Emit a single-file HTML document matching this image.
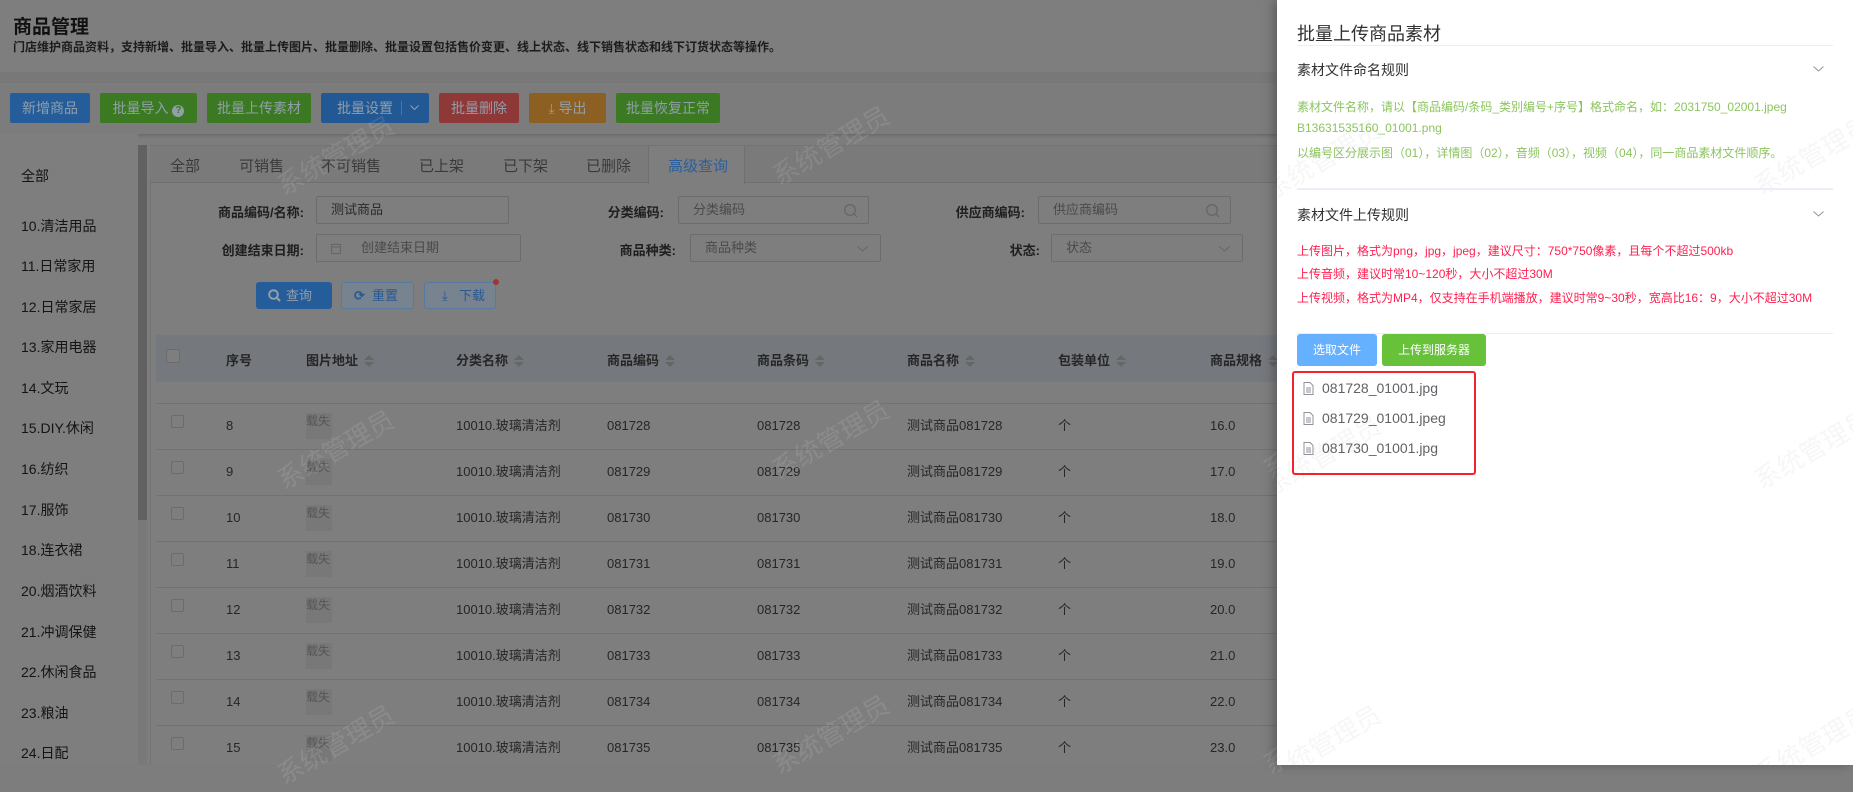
<!DOCTYPE html>
<html><head><meta charset="utf-8">
<style>
*{box-sizing:border-box;margin:0;padding:0}
body{width:1853px;height:765px;overflow:hidden;position:relative;background:#7d7d7d;font-family:"Liberation Sans","Noto Sans CJK SC",sans-serif;color:#1e1e1e}
.a{position:absolute;white-space:nowrap}
.btn{position:absolute;top:93px;height:30px;border-radius:2px;color:#929eaa;font-size:14px;line-height:30px;text-align:center}
.side{font-size:14px;color:#141414;left:21px}
.tab{font-size:15px;color:#3a3a3a;top:155px}
.lbl{font-size:13px;font-weight:bold;color:#1f1f1f;text-align:right}
.inp{position:absolute;border:1px solid #6c6c6c;border-radius:2px;background:#7e7e7e;font-size:13px;color:#4a4a4a;line-height:26px;padding-left:14px}
.th{font-size:13px;font-weight:bold;color:#262626;top:350px}
.sort{display:inline-block;width:0;vertical-align:middle;margin-left:6px;position:relative;top:-1px}
.sort:before{content:"";position:absolute;left:0;top:-6px;border:5px solid transparent;border-bottom-color:#666;border-top:0}
.sort:after{content:"";position:absolute;left:0;top:1px;border:5px solid transparent;border-top-color:#666;border-bottom:0}
.td{font-size:13px;color:#262626;height:20px;line-height:20px}
.wm{position:absolute;font-size:26px;transform:rotate(-30deg);white-space:nowrap;font-family:"Liberation Sans","Noto Sans CJK SC",sans-serif}
svg.a{overflow:visible}
</style></head><body>
<div class="a" style="left:0;top:0;width:1277px;height:72px;background:#7e7e7e"></div>
<div class="a" style="left:13px;top:12px;font-size:19px;font-weight:bold;color:#111">商品管理</div>
<div class="a" style="left:13px;top:38px;font-size:12px;font-weight:bold;color:#1c1c1c">门店维护商品资料，支持新增、批量导入、批量上传图片、批量删除、批量设置包括售价变更、线上状态、线下销售状态和线下订货状态等操作。</div>
<div class="a" style="left:0;top:72px;width:1277px;height:12px;background:#787878"></div>
<div class="a" style="left:0;top:83px;width:1277px;height:51px;background:#7c7c7c;box-shadow:0 2px 3px rgba(0,0,0,.15)"></div>
<div class="btn" style="left:10px;width:80px;background:#245d9a">新增商品</div>
<div class="btn" style="left:100px;width:97px;background:#3b7a23">批量导入 <span style="display:inline-block;width:12px;height:12px;border-radius:50%;background:#929eaa;color:#3b7a23;font-size:10px;line-height:12px;font-weight:bold">?</span></div>
<div class="btn" style="left:207px;width:104px;background:#3b7a23">批量上传素材</div>
<div class="btn" style="left:321px;width:108px;background:#225894;text-align:left;padding-left:16px">批量设置<span style="position:absolute;left:80px;top:8px;height:14px;border-left:1px solid #4f74a0"></span><svg class="a" style="left:89px;top:12px" width="9" height="6"><path d="M.5 .5L4.5 4.5L8.5 .5" fill="none" stroke="#929eaa"/></svg></div>
<div class="btn" style="left:439px;width:80px;background:#8e3838">批量删除</div>
<div class="btn" style="left:529px;width:77px;background:#8c6022">⤓ 导出</div>
<div class="btn" style="left:616px;width:104px;background:#3b7a23">批量恢复正常</div>
<div class="a" style="left:0;top:134px;width:138px;height:631px;background:#7e7e7e"></div>
<div class="a" style="left:138px;top:145px;width:9px;height:375px;background:#616161"></div>
<div class="a" style="left:138px;top:520px;width:9px;height:245px;background:#797979"></div>
<div class="a side" style="top:166px">全部</div>
<div class="a side" style="top:216px">10.清洁用品</div>
<div class="a side" style="top:256px">11.日常家用</div>
<div class="a side" style="top:297px">12.日常家居</div>
<div class="a side" style="top:337px">13.家用电器</div>
<div class="a side" style="top:378px">14.文玩</div>
<div class="a side" style="top:418px">15.DIY.休闲</div>
<div class="a side" style="top:459px">16.纺织</div>
<div class="a side" style="top:500px">17.服饰</div>
<div class="a side" style="top:540px">18.连衣裙</div>
<div class="a side" style="top:581px">20.烟酒饮料</div>
<div class="a side" style="top:622px">21.冲调保健</div>
<div class="a side" style="top:662px">22.休闲食品</div>
<div class="a side" style="top:703px">23.粮油</div>
<div class="a side" style="top:743px">24.日配</div>
<div class="a" style="left:150px;top:145px;width:1127px;height:620px;background:#7e7e7e;border-left:1px solid #737373;border-top:1px solid #737373"></div>
<div class="a" style="left:150px;top:146px;width:1127px;height:37px;background:#7a7a7a;border-bottom:1px solid #6f6f6f"></div>
<div class="a" style="left:648px;top:146px;width:97px;height:38px;background:#7e7e7e;border-left:1px solid #6f6f6f;border-right:1px solid #6f6f6f"></div>
<div class="a tab" style="left:170px">全部</div>
<div class="a tab" style="left:239px">可销售</div>
<div class="a tab" style="left:321px">不可销售</div>
<div class="a tab" style="left:419px">已上架</div>
<div class="a tab" style="left:503px">已下架</div>
<div class="a tab" style="left:586px">已删除</div>
<div class="a tab" style="left:668px;color:#2a5e9e">高级查询</div>
<div class="a lbl" style="left:200px;width:104px;top:202px">商品编码/名称:</div>
<div class="inp" style="left:316px;top:196px;width:193px;height:28px;color:#2a2a2a">测试商品</div>
<div class="a lbl" style="left:560px;width:104px;top:202px">分类编码:</div>
<div class="inp" style="left:678px;top:196px;width:191px;height:28px">分类编码<svg class="a" style="right:10px;top:7px" width="14" height="14"><circle cx="6" cy="6" r="5.3" fill="none" stroke="#666" stroke-width="1.3"/><path d="M10 10L13 13" stroke="#666" stroke-width="1.3"/></svg></div>
<div class="a lbl" style="left:921px;width:104px;top:202px">供应商编码:</div>
<div class="inp" style="left:1038px;top:196px;width:193px;height:28px">供应商编码<svg class="a" style="right:10px;top:7px" width="14" height="14"><circle cx="6" cy="6" r="5.3" fill="none" stroke="#666" stroke-width="1.3"/><path d="M10 10L13 13" stroke="#666" stroke-width="1.3"/></svg></div>
<div class="a lbl" style="left:200px;width:104px;top:240px">创建结束日期:</div>
<div class="inp" style="left:316px;top:234px;width:205px;height:28px;padding-left:44px"><svg class="a" style="left:14px;top:8px" width="10" height="11"><rect x=".5" y="1.5" width="9" height="9" fill="none" stroke="#666"/><path d="M.5 4h9M3 0v2M7 0v2" stroke="#666"/></svg>创建结束日期</div>
<div class="a lbl" style="left:572px;width:104px;top:240px">商品种类:</div>
<div class="inp" style="left:690px;top:234px;width:191px;height:28px">商品种类<svg class="a" style="right:12px;top:11px" width="11" height="6"><path d="M.5 .5L5.5 5L10.5 .5" fill="none" stroke="#666"/></svg></div>
<div class="a lbl" style="left:936px;width:104px;top:240px">状态:</div>
<div class="inp" style="left:1051px;top:234px;width:192px;height:28px">状态<svg class="a" style="right:12px;top:11px" width="11" height="6"><path d="M.5 .5L5.5 5L10.5 .5" fill="none" stroke="#666"/></svg></div>
<div class="a" style="left:256px;top:282px;width:76px;height:27px;background:#245d9a;border-radius:3px;color:#929eaa;font-size:13px;line-height:27px;padding-left:30px"><svg class="a" style="left:12px;top:7px" width="13" height="13"><circle cx="5.5" cy="5.5" r="4.3" fill="none" stroke="#929eaa" stroke-width="2"/><path d="M9 9L12 12" stroke="#929eaa" stroke-width="2.2"/></svg>查询</div>
<div class="a" style="left:341px;top:282px;width:73px;height:27px;background:#788390;border:1px solid #587aa0;border-radius:3px;color:#285892;font-size:13px;line-height:25px;padding-left:30px"><span style="position:absolute;left:12px;top:0;font-weight:bold">⟳</span>重置</div>
<div class="a" style="left:424px;top:282px;width:72px;height:27px;background:#788390;border:1px solid #587aa0;border-radius:3px;color:#285892;font-size:13px;line-height:25px;padding-left:34px"><span style="position:absolute;left:17px;top:0">⤓</span>下载</div>
<div class="a" style="left:493px;top:279px;width:6px;height:6px;border-radius:50%;background:#a03535"></div>
<div class="a" style="left:156px;top:335px;width:1121px;height:47px;background:#75787d"></div>
<div class="a" style="left:166px;top:349px;width:14px;height:14px;border:1px solid #6c6c6c;background:#7e7e7e;border-radius:2px"></div>
<div class="a th" style="left:226px">序号</div>
<div class="a th" style="left:306px">图片地址<span class="sort"></span></div>
<div class="a th" style="left:456px">分类名称<span class="sort"></span></div>
<div class="a th" style="left:607px">商品编码<span class="sort"></span></div>
<div class="a th" style="left:757px">商品条码<span class="sort"></span></div>
<div class="a th" style="left:907px">商品名称<span class="sort"></span></div>
<div class="a th" style="left:1058px">包装单位<span class="sort"></span></div>
<div class="a th" style="left:1210px">商品规格<span class="sort"></span></div>
<div id="rows"></div>
<script>
var h='';
for(var i=0;i<8;i++){var y=403+i*46;var n=8+i;var c='0817'+(28+i);
h+='<div class="a" style="left:156px;top:'+y+'px;width:1121px;border-top:1px solid #727272"></div>';
var t=y+13;
h+='<div class="a" style="left:171px;top:'+(t-1)+'px;width:13px;height:13px;border:1px solid #6c6c6c;border-radius:2px"></div>';
h+='<div class="a td" style="left:226px;top:'+t+'px">'+n+'</div>';
h+='<div class="a" style="left:306px;top:'+(y+10)+'px;width:26px;height:26px;background:#787878;font-size:12px;color:#555;line-height:16px">载失</div>';
h+='<div class="a td" style="left:456px;top:'+t+'px">10010.玻璃清洁剂</div>';
h+='<div class="a td" style="left:607px;top:'+t+'px">'+c+'</div>';
h+='<div class="a td" style="left:757px;top:'+t+'px">'+c+'</div>';
h+='<div class="a td" style="left:907px;top:'+t+'px">测试商品'+c+'</div>';
h+='<div class="a td" style="left:1058px;top:'+t+'px">个</div>';
h+='<div class="a td" style="left:1210px;top:'+t+'px">'+(16+i)+'.0</div>';}
document.getElementById('rows').innerHTML=h;
</script>
<div class="wm" style="left:270px;top:136px;color:rgba(255,255,255,.1)">系统管理员</div>
<div class="wm" style="left:765px;top:126px;color:rgba(255,255,255,.1)">系统管理员</div>
<div class="wm" style="left:270px;top:430px;color:rgba(255,255,255,.1)">系统管理员</div>
<div class="wm" style="left:765px;top:420px;color:rgba(255,255,255,.1)">系统管理员</div>
<div class="wm" style="left:1256px;top:420px;color:rgba(255,255,255,.1)">系统管理员</div>
<div class="wm" style="left:270px;top:725px;color:rgba(255,255,255,.1)">系统管理员</div>
<div class="wm" style="left:765px;top:715px;color:rgba(255,255,255,.1)">系统管理员</div>
<div class="wm" style="left:1256px;top:715px;color:rgba(255,255,255,.1)">系统管理员</div>
<div class="a" style="left:1277px;top:0;width:576px;height:765px;background:#fff;box-shadow:-4px 0 10px rgba(0,0,0,.25);overflow:hidden">
 <div class="wm" style="left:-20px;top:140px;color:rgba(0,0,0,.035)">系统管理员</div>
 <div class="wm" style="left:470px;top:136px;color:rgba(0,0,0,.035)">系统管理员</div>
 <div class="wm" style="left:-20px;top:436px;color:rgba(0,0,0,.035)">系统管理员</div>
 <div class="wm" style="left:470px;top:430px;color:rgba(0,0,0,.035)">系统管理员</div>
 <div class="wm" style="left:-20px;top:725px;color:rgba(0,0,0,.035)">系统管理员</div>
 <div class="wm" style="left:470px;top:725px;color:rgba(0,0,0,.035)">系统管理员</div>
 <div class="a" style="left:20px;top:20px;font-size:18px;color:#303133">批量上传商品素材</div>
 <div class="a" style="left:20px;top:45px;width:536px;border-top:1px solid #ebeef5"></div>
 <div class="a" style="left:20px;top:60px;font-size:14px;color:#303133">素材文件命名规则</div>
 <svg class="a" style="left:536px;top:66px" width="11" height="6"><path d="M.5 .5L5.5 5L10.5 .5" fill="none" stroke="#909399"/></svg>
 <div class="a" style="left:20px;top:98px;font-size:12px;color:#8cc55f">素材文件名称，请以【商品编码/条码_类别编号+序号】格式命名，如：2031750_02001.jpeg</div>
 <div class="a" style="left:20px;top:121px;font-size:12px;color:#8cc55f">B13631535160_01001.png</div>
 <div class="a" style="left:20px;top:144px;font-size:12px;color:#8cc55f">以编号区分展示图（01），详情图（02），音频（03），视频（04），同一商品素材文件顺序。</div>
 <div class="a" style="left:20px;top:188px;width:536px;border-top:2px solid #ebeef5"></div>
 <div class="a" style="left:20px;top:205px;font-size:14px;color:#303133">素材文件上传规则</div>
 <svg class="a" style="left:536px;top:211px" width="11" height="6"><path d="M.5 .5L5.5 5L10.5 .5" fill="none" stroke="#909399"/></svg>
 <div class="a" style="left:20px;top:242px;font-size:12px;color:#ff1f4f">上传图片，格式为png，jpg，jpeg，建议尺寸：750*750像素，且每个不超过500kb</div>
 <div class="a" style="left:20px;top:265px;font-size:12px;color:#ff1f4f">上传音频，建议时常10~120秒，大小不超过30M</div>
 <div class="a" style="left:20px;top:289px;font-size:12px;color:#ff1f4f">上传视频，格式为MP4，仅支持在手机端播放，建议时常9~30秒，宽高比16：9，大小不超过30M</div>
 <div class="a" style="left:20px;top:333px;width:536px;border-top:1px solid #ebeef5"></div>
 <div class="a" style="left:20px;top:334px;width:80px;height:32px;background:#66b1ff;border-radius:3px;color:#fff;font-size:12px;line-height:32px;text-align:center">选取文件</div>
 <div class="a" style="left:105px;top:334px;width:104px;height:32px;background:#67c23a;border-radius:3px;color:#fff;font-size:12px;line-height:32px;text-align:center">上传到服务器</div>
 <div class="a" style="left:15px;top:371px;width:184px;height:104px;border:2px solid #f5222d;border-radius:3px"></div>
 <div id="files"></div>
</div>
<script>
var f=['081728_01001.jpg','081729_01001.jpeg','081730_01001.jpg'],s='';
for(var i=0;i<3;i++){var y=378+i*30;
s+='<svg class="a" style="left:26px;top:'+(y+4)+'px" width="11" height="13" viewBox="0 0 11 13"><path d="M1 .5h6l3 3v9H1z" fill="none" stroke="#909399"/><path d="M3 6h5M3 8h5M3 10h5" stroke="#909399"/></svg>';
s+='<div class="a" style="left:45px;top:'+y+'px;font-size:14px;line-height:20px;color:#606266">'+f[i]+'</div>';}
document.getElementById('files').innerHTML=s;
</script>
</body></html>
